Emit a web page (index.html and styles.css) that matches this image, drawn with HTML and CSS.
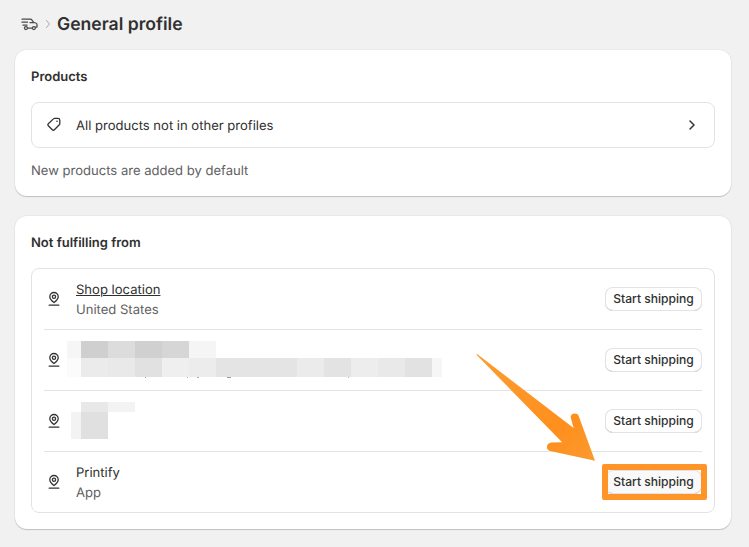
FILE: index.html
```html
<!DOCTYPE html>
<html lang="en">
<head>
<meta charset="utf-8">
<title>General profile</title>
<link rel="stylesheet" href="styles.css">
</head>
<body>
<main class="page">
  <header class="crumbs">
    <svg class="truck" viewBox="21 17 18 14" width="18" height="14" fill="none" stroke="#4a4a4a" stroke-width="1.25" stroke-linecap="round" stroke-linejoin="round">
      <path d="M22 19.200h8.500c.6 0 1 .2 1.300.6l2 2.700 1.900.5c.8.2 1.300.8 1.300 1.500v2.500h-1.200"/>
      <path d="M22 22.200h5.500M23 25.200h4M27.500 28h4.700M30 22.500h4"/>
      <circle cx="25.900" cy="28" r="1.500"/>
      <circle cx="33.900" cy="28" r="1.500"/>
    </svg>
    <svg class="sep" viewBox="0 0 6 10" width="6" height="10" fill="none" stroke="#a8a8a8" stroke-width="1" stroke-linecap="round" stroke-linejoin="round"><path d="M1.500 1.500 4.500 5l-3 3.500"/></svg>
    <h1>General profile</h1>
  </header>

  <section class="card products">
    <h2>Products</h2>
    <div class="box link-row">
      <svg class="icon" viewBox="0 0.800 16 16" width="16" height="16" fill="none" stroke="#333" stroke-width="1.300" stroke-linejoin="round"><path d="M8.600 2.200H12c1 0 1.800.8 1.800 1.800v3.400c0 .5-.2.9-.5 1.200L8.400 13.600c-.6.6-1.500.6-2.100 0L2.300 9.600c-.6-.6-.6-1.500 0-2.100L7.400 2.700c.3-.3.8-.5 1.200-.5z"/><circle cx="11" cy="5" r=".8" fill="#333" stroke="none"/></svg>
      <span class="label">All products not in other profiles</span>
      <svg class="chev" viewBox="0 0 10 12" width="10" height="12" fill="none" stroke="#333" stroke-width="1.500" stroke-linecap="round" stroke-linejoin="round"><path d="M3 2l4 4-4 4"/></svg>
    </div>
    <p class="note">New products are added by default</p>
  </section>

  <section class="card locations">
    <h2>Not fulfilling from</h2>
    <div class="box rows">
      <div class="row">
        <svg class="pin" viewBox="0 0 16 16" width="16" height="16" fill="none" stroke="#333" stroke-width="1.300" stroke-linecap="round" stroke-linejoin="round"><path d="M8 11.600C6 10 3.800 8.200 3.800 5.700a4.200 4.200 0 0 1 8.400 0c0 2.500-2.200 4.300-4.200 5.900z"/><circle cx="8" cy="5.700" r="1.600"/><path d="M3.200 14.200h9.600"/></svg>
        <div class="text"><a class="name" href="#">Shop location</a><span class="sub">United States</span></div>
        <button class="btn" type="button">Start shipping</button>
      </div>
      <div class="row">
        <svg class="pin" viewBox="0 0 16 16" width="16" height="16" fill="none" stroke="#333" stroke-width="1.300" stroke-linecap="round" stroke-linejoin="round"><path d="M8 11.600C6 10 3.800 8.200 3.800 5.700a4.200 4.200 0 0 1 8.400 0c0 2.500-2.200 4.300-4.200 5.900z"/><circle cx="8" cy="5.700" r="1.600"/><path d="M3.200 14.200h9.600"/></svg>
        <svg class="mosaic mosaic-a" width="375" height="38" viewBox="67 341 375 38" shape-rendering="crispEdges">
          <rect x="67" y="341" width="14" height="17" fill="#f6f6f6"/>
          <rect x="81" y="341" width="27" height="17" fill="#cfcfcf"/>
          <rect x="108" y="341" width="27" height="17" fill="#dcdcdc"/>
          <rect x="135" y="341" width="27" height="17" fill="#d0d0d0"/>
          <rect x="162" y="341" width="27" height="17" fill="#d6d6d6"/>
          <rect x="189" y="341" width="27" height="17" fill="#f5f5f5"/>
          <rect x="67" y="358" width="14" height="19" fill="#fbfbfb"/>
          <rect x="81" y="358" width="27" height="19" fill="#ebebeb"/>
          <rect x="108" y="358" width="27" height="19" fill="#e9e9e9"/>
          <rect x="135" y="358" width="27" height="19" fill="#e1e1e1"/>
          <rect x="162" y="358" width="27" height="19" fill="#efefef"/>
          <rect x="189" y="358" width="27" height="19" fill="#ececec"/>
          <rect x="216" y="358" width="27" height="19" fill="#e4e4e4"/>
          <rect x="243" y="358" width="54" height="19" fill="#e4e4e4"/>
          <rect x="297" y="358" width="27" height="19" fill="#ebebeb"/>
          <rect x="324" y="358" width="27" height="19" fill="#e3e3e3"/>
          <rect x="351" y="358" width="27" height="19" fill="#ededed"/>
          <rect x="378" y="358" width="27" height="19" fill="#e9e9e9"/>
          <rect x="405" y="358" width="27" height="19" fill="#e2e2e2"/>
          <rect x="432" y="358" width="10" height="19" fill="#f6f6f6"/>
          <rect x="145" y="377" width="1" height="1" fill="#999"/>
          <rect x="187" y="377" width="1" height="1" fill="#aaa"/>
          <rect x="197" y="377" width="2" height="1" fill="#aaa"/>
          <rect x="227" y="377" width="4" height="1" fill="#999"/>
          <rect x="348" y="377" width="1" height="1" fill="#bbb"/>
        </svg>
        <div class="text"></div>
        <button class="btn" type="button">Start shipping</button>
      </div>
      <div class="row">
        <svg class="pin" viewBox="0 0 16 16" width="16" height="16" fill="none" stroke="#333" stroke-width="1.300" stroke-linecap="round" stroke-linejoin="round"><path d="M8 11.600C6 10 3.800 8.200 3.800 5.700a4.200 4.200 0 0 1 8.400 0c0 2.500-2.200 4.300-4.200 5.900z"/><circle cx="8" cy="5.700" r="1.600"/><path d="M3.200 14.200h9.600"/></svg>
        <svg class="mosaic mosaic-b" width="64" height="37" viewBox="71 402 64 37" shape-rendering="crispEdges">
          <rect x="81" y="402" width="27" height="10" fill="#e8e8e8"/>
          <rect x="108" y="402" width="27" height="10" fill="#f3f3f3"/>
          <rect x="71" y="412" width="10" height="27" fill="#f3f3f3"/>
          <rect x="81" y="412" width="27" height="27" fill="#e0e0e0"/>
        </svg>
        <div class="text"></div>
        <button class="btn" type="button">Start shipping</button>
      </div>
      <div class="row">
        <svg class="pin" viewBox="0 0 16 16" width="16" height="16" fill="none" stroke="#333" stroke-width="1.300" stroke-linecap="round" stroke-linejoin="round"><path d="M8 11.600C6 10 3.800 8.200 3.800 5.700a4.200 4.200 0 0 1 8.400 0c0 2.500-2.200 4.300-4.200 5.900z"/><circle cx="8" cy="5.700" r="1.600"/><path d="M3.200 14.200h9.600"/></svg>
        <div class="text"><span class="name plain">Printify</span><span class="sub">App</span></div>
        <div class="target">
          <button class="btn btn-hover" type="button">Start shipping</button>
          <span class="ring"></span>
        </div>
      </div>
    </div>
  </section>
</main>
<svg class="arrow" width="749" height="547" viewBox="0 0 749 547">
  <defs>
    <linearGradient id="ag" x1="0" y1="0" x2="1" y2="1">
      <stop offset="0" stop-color="#fb9d33"/>
      <stop offset=".7" stop-color="#ff8f1c"/>
      <stop offset="1" stop-color="#fb9a30"/>
    </linearGradient>
  </defs>
  <path fill="url(#ag)" d="M476.600 354.600c.3-.4.8-.4 1.200-.1L573.600 428l-2.800-10.200c-.5-2 .6-3.400 2.400-4 2-.6 4.800.2 5.500 2.200L595 460.700l-44.800-9.700c-2.200-.5-3.500-2-3.200-4.400.3-2.500 1.900-4 4.200-4.200l10.900-.2-85.400-87.100c-.3-.2-.4-.7-.1-1z"/>
</svg>
</body>
</html>
```
FILE: styles.css
```css
* { box-sizing: border-box; }
html, body { margin: 0; padding: 0; }
body {
  width: 749px;
  height: 547px;
  overflow: hidden;
  background: #f1f1f1;
  font-family: Inter, "Liberation Sans", sans-serif;
  font-size: 13.06px;
  line-height: 20px;
  color: #303030;
  position: relative;
  text-rendering: geometricPrecision;
}
.page {
  display: flex;
  flex-direction: column;
  gap: 20px;
  padding: 12px 18px 0 15px;
}
.crumbs {
  display: flex;
  align-items: center;
  height: 24px;
  margin-bottom: -6px;
  padding-left: 6px;
}
.truck { flex: none; }
.sep { flex: none; margin: 0 6px; }
h1 {
  margin: 0;
  padding-top: 2px;
  font-size: 17.6px;
  line-height: 24px;
  font-weight: 600;
  color: #303030;
}
.card {
  background: #fff;
  border-radius: 12px;
  padding: 16px;
  box-shadow: 0 0 0 1px rgba(0,0,0,.03), 0 1px 1px rgba(0,0,0,.18);
}
h2 {
  margin: 0 0 15px;
  padding-top: 1px;
  font-size: 13px;
  line-height: 20px;
  font-weight: 600;
  color: #303030;
}
.box {
  border: 1px solid #e3e3e3;
  border-radius: 8px;
}
.link-row {
  display: flex;
  align-items: center;
  height: 46px;
  padding: 0 14px;
}
.icon { flex: none; margin-right: 14px; }
.label { flex: 1; padding-top: 2px; }
.chev { flex: none; margin-right: 3px; }
.note {
  margin: 13px 0 -1px;
  color: #616161;
}
.rows { padding: 0 12px; }
.row {
  position: relative;
  display: flex;
  align-items: center;
  height: 61px;
  border-bottom: 1px solid #e3e3e3;
}
.row:last-child { height: 60px; border-bottom: 0; }
.pin { flex: none; margin: 0 14px 0 2px; }
.text { flex: 1; display: flex; flex-direction: column; padding-top: 2px; }
.name { color: #303030; }
.sub { color: #616161; }
.btn {
  flex: none;
  width: 97px;
  height: 24px;
  padding: 0;
  border: 0;
  border-radius: 8px;
  background: #fff;
  font: 500 12.1px/20px Inter, "Liberation Sans", sans-serif;
  color: #303030;
  box-shadow: inset 0 0 0 1px #e3e3e3, inset 0 -1px 0 #b5b5b5;
}
.btn-hover { background: #f9f9f9; }
.target { position: relative; flex: none; display: flex; }
.ring {
  position: absolute;
  left: -3px;
  top: -6px;
  width: 105px;
  height: 36px;
  border: 6px solid #ff9429;
  border-radius: 2px;
}
.mosaic { position: absolute; }
.mosaic-a { left: 23px; top: 11px; }
.mosaic-b { left: 27px; top: 11px; }
.arrow { position: absolute; left: 0; top: 0; pointer-events: none; }
```
